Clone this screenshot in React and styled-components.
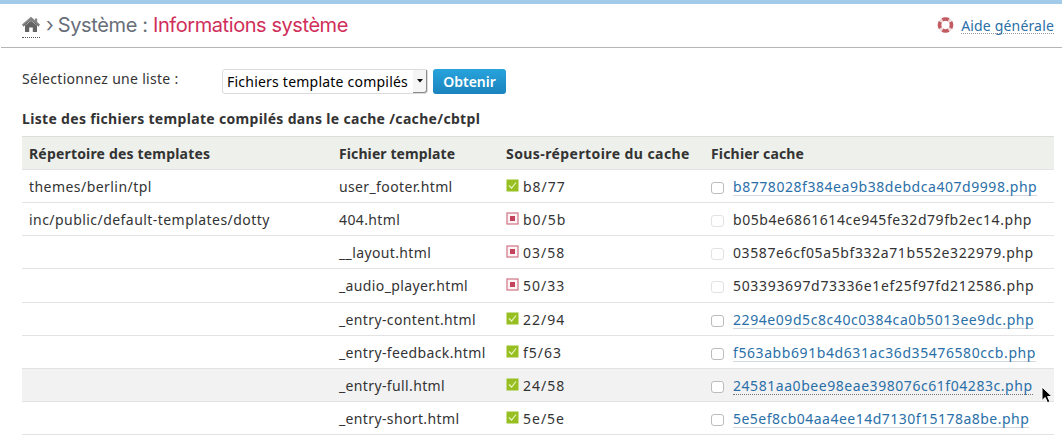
import React from 'react';
import styled, { createGlobalStyle } from 'styled-components';

const Global = createGlobalStyle`
  * { box-sizing: border-box; }
  body {
    margin: 0;
    background: #fff;
    color: #333;
    font: 14px/20px "Noto Sans", "Open Sans", sans-serif;
    overflow: hidden;
  }
`;

const Page = styled.div`
  position: relative;
  width: 1062px;
  height: 442px;
  overflow: hidden;
  border-top: 4px solid #a2cbe9;
`;
const Header = styled.header`
  display: flex;
  align-items: flex-start;
  justify-content: space-between;
  height: 44px;
  margin-left: 1px;
  padding: 9px 8px 0 21px;
  border-bottom: 1px solid #b5b5b5;
`;
const Crumbs = styled.h1`
  display: flex;
  margin: 0;
  font: 400 20px/24px Inter, sans-serif;
  color: #676e78;
  white-space: pre;
`;
const HomeLink = styled.a`
  width: 18px;
  height: 25px;
  padding-top: 3px;
  border-bottom: 1px dotted #555;
  line-height: 0;
`;
const Crumb = styled.span`
  margin-left: ${p => p.$gap || 0}px;
  letter-spacing: ${p => p.$ls || 0}px;
  color: ${p => (p.$current ? '#d02e5a' : 'inherit')};
`;
const Help = styled.div`
  display: flex;
  gap: 7px;
  padding-top: 4px;
`;
const HelpLink = styled.a`
  height: 17px;
  color: #2a6fa8;
  line-height: 17px;
  letter-spacing: 0.17px;
  border-bottom: 1px dotted #999;
`;
const Form = styled.form`
  display: flex;
  padding: 21px 0 0 22px;
`;
const Label = styled.label`
  width: 200px;
  line-height: 20px;
  letter-spacing: 0.3px;
`;
const Select = styled.div`
  display: flex;
  justify-content: space-between;
  width: 206px;
  height: 25px;
  padding-left: 4px;
  border: 1px solid #dcdcdc;
  border-radius: 3px;
  color: #000;
  line-height: 23px;
  letter-spacing: 0.22px;
  white-space: nowrap;
`;
const Arrow = styled.span`
  display: flex;
  align-items: center;
  justify-content: center;
  width: 14px;
  height: 23px;
  background: #f5f5f5;
  border-right: 1.5px solid #8a8a8a;
  border-bottom: 1.5px solid #8a8a8a;
  border-radius: 0 0 3px 0;
`;
const Button = styled.button`
  width: 73px;
  height: 25px;
  margin-left: 5px;
  padding: 0;
  border: 0;
  border-radius: 3px;
  background: linear-gradient(#27a3dc, #1b83bd);
  color: #fff;
  font: 600 14px/25px "Noto Sans", sans-serif;
`;
const Table = styled.section`
  margin: 15px 8px 0 22px;
`;
const Caption = styled.h2`
  height: 27px;
  margin: 0;
  font-size: 14px;
  font-weight: 700;
  line-height: 20px;
  letter-spacing: 0.32px;
`;
const Row = styled.div`
  display: grid;
  grid-template-columns: 310px 167px 205px 1fr;
  height: 33.12px;
  padding-left: 7px;
  border-top: 1px solid #e3e3e3;
  line-height: 33px;
  white-space: nowrap;
  background: ${p => (p.$hover ? '#f2f2f2' : 'transparent')};
  &:last-child { border-bottom: 1px solid #e3e3e3; height: 34.2px; }
`;
const HeadRow = styled(Row)`
  background: #eef0eb;
  border-color: #dcdedb;
  font-weight: 700;
`;
const Cell = styled.div`
  display: flex;
  letter-spacing: ${p => p.$ls || 0}px;
`;
const Status = styled.svg`
  width: 13px;
  height: 13px;
  margin: 9px 4px 0 0;
  flex: none;
`;
const Check = styled.span`
  width: 13px;
  height: 12px;
  margin: 12px 9px 0 0;
  border: 1px solid ${p => (p.$off ? '#e2e2e2' : '#bcbcbc')};
  border-radius: 3px;
  background: #fff;
  flex: none;
`;
const FileLink = styled.a`
  height: 26px;
  color: #2a6fa8;
  border-bottom: 1px ${p => (p.$hover ? 'dotted #777' : 'solid #d3d9df')};
`;
const Pointer = styled.svg`
  position: absolute;
  left: 1041px;
  top: 382px;
  width: 12px;
  height: 18px;
`;

const StatusIcon = ({ ok }) => (
  <Status viewBox="0 0 13 13">
    {ok ? (
      <>
        <rect x=".5" y=".5" width="12" height="12" fill="#97bf22" />
        <path d="M3 6.5 5.6 9 10 3.5" fill="none" stroke="#e9f5c4" strokeWidth="1.2" />
      </>
    ) : (
      <>
        <rect x="1" y="1" width="11" height="11" fill="#fff4f5" stroke="#cf7383" strokeWidth="1.2" />
        <rect x="4" y="4" width="5" height="5" fill="#c3435c" />
      </>
    )}
  </Status>
);

// Each entry: directory, template, compiled, cache folder, cache file, tracking of the file name.
const rows = [
  ['themes/berlin/tpl', 'user_footer.html', 1, 'b8/77', 'b8778028f384ea9b38debdca407d9998.php', 0.55],
  ['inc/public/default-templates/dotty', '404.html', 0, 'b0/5b', 'b05b4e6861614ce945fe32d79fb2ec14.php', 0.56],
  ['', '__layout.html', 0, '03/58', '03587e6cf05a5bf332a71b552e322979.php', 0.61],
  ['', '_audio_player.html', 0, '50/33', '503393697d73336e1ef25f97fd212586.php', 0.67],
  ['', '_entry-content.html', 1, '22/94', '2294e09d5c8c40c0384ca0b5013ee9dc.php', 0.57],
  ['', '_entry-feedback.html', 1, 'f5/63', 'f563abb691b4d631ac36d35476580ccb.php', 0.58],
  ['', '_entry-full.html', 1, '24/58', '24581aa0bee98eae398076c61f04283c.php', 0.55, true],
  ['', '_entry-short.html', 1, '5e/5e', '5e5ef8cb04aa4ee14d7130f15178a8be.php', 0.48],
];

export default function App() {
  return (
    <Page>
      <Global />
      <Header>
        <Crumbs>
          <HomeLink>
            <svg width="18" height="17" viewBox="0 0 18 17">
              <path d="M3 9.6 9 4.8l6 4.8V16h-4.2v-4.4H7.2V16H3z" fill="#646464" />
              <path d="M.6 9.4 9 2.2l8.4 7.2" fill="none" stroke="#858585" strokeWidth="2.2" />
              <path d="M1.2 10.2 9 3.8l7.8 6.4" fill="none" stroke="#5f5f5f" strokeWidth="1" />
              <path d="M13 2.4h2.2v4.4L13 5z" fill="#858585" />
            </svg>
          </HomeLink>
          <Crumb $gap={6}>›</Crumb>
          <Crumb $gap={4} $ls={-0.35}>Système : </Crumb>
          <Crumb $current $ls={-0.43}>Informations système</Crumb>
        </Crumbs>
        <Help>
          <svg width="17" height="17" viewBox="0 0 17 17">
            <circle cx="8.5" cy="8" r="6" fill="none" stroke="#eed9da" strokeWidth="3.6" />
            <circle cx="8.5" cy="8" r="6" fill="none" stroke="#c25c62" strokeWidth="3.6" pathLength="8" strokeDasharray="1.4 .6" strokeDashoffset=".7" />
          </svg>
          <HelpLink>Aide générale</HelpLink>
        </Help>
      </Header>
      <Form>
        <Label>Sélectionnez une liste :</Label>
        <Select>
          Fichiers template compilés
          <Arrow>
            <svg width="6" height="4" viewBox="0 0 6 4"><path d="M0 0h6L3 3.6z" fill="#111" /></svg>
          </Arrow>
        </Select>
        <Button type="button">Obtenir</Button>
      </Form>
      <Table>
        <Caption>Liste des fichiers template compilés dans le cache /cache/cbtpl</Caption>
        <HeadRow>
          <Cell $ls={0.18}>Répertoire des templates</Cell>
          <Cell $ls={0.1}>Fichier template</Cell>
          <Cell $ls={0.42}>Sous-répertoire du cache</Cell>
          <Cell $ls={0.17}>Fichier cache</Cell>
        </HeadRow>
        {rows.map(([dir, tpl, ok, sub, file, ls, hover]) => (
          <Row key={file} $hover={hover}>
            <Cell $ls={0.45}>{dir}</Cell>
            <Cell $ls={0.37}>{tpl}</Cell>
            <Cell $ls={1}><StatusIcon ok={ok} />{sub}</Cell>
            <Cell $ls={ls}>
              <Check $off={!ok} />
              {ok ? <FileLink $hover={hover}>{file}</FileLink> : file}
            </Cell>
          </Row>
        ))}
      </Table>
      <Pointer viewBox="0 0 12 18">
        <path d="M1 1v13.5l3.2-3 2.3 5.2 2.4-1.1-2.3-5H11z" fill="#000" stroke="#fff" strokeWidth="1" />
      </Pointer>
    </Page>
  );
}
